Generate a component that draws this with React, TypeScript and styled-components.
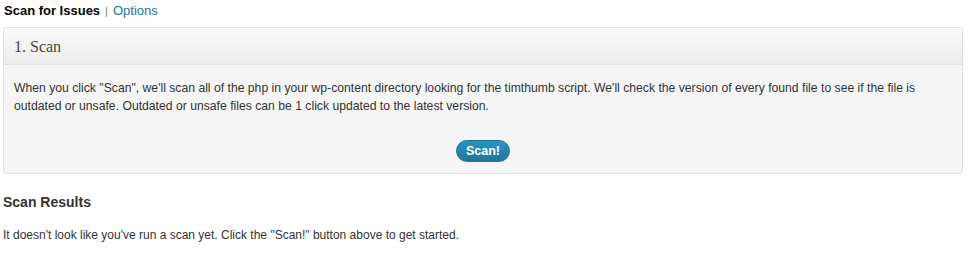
import React from 'react';
import styled, {createGlobalStyle} from "styled-components";

const GlobalStyle = createGlobalStyle`
  html, body {
    margin: 0;
    padding: 0;
    background: #ffffff;
  }
  body {
    font-family: "Liberation Sans", Arial, sans-serif;
    font-size: 13px;
    color: #333333;
  }
`;

function App() {
  return (
    <>
      <GlobalStyle />
      <Page>
        <SubNav>
          <li className="current">Scan for Issues</li>
          <li className="sep">|</li>
          <li><a href="#">Options</a></li>
        </SubNav>

        <Postbox>
          <PostboxTitle>1. Scan</PostboxTitle>
          <PostboxInside>
            <p>
              When you click "Scan", we'll scan all of the php in your wp-content directory looking for the timthumb script. We'll check the version of every found file to see if the file is outdated or unsafe. Outdated or unsafe files can be 1 click updated to the latest version.
            </p>
            <ButtonRow>
              <ScanButton>Scan!</ScanButton>
            </ButtonRow>
          </PostboxInside>
        </Postbox>

        <SectionTitle>Scan Results</SectionTitle>
        <Note>It doesn't look like you've run a scan yet. Click the "Scan!" button above to get started.</Note>
      </Page>
    </>
  );
}

export default App;

const Page = styled.div`
  padding: 0 6px 0 3px;
`;

const SubNav = styled.ul`
  list-style: none;
  margin: 0;
  padding: 3px 0 0 1px;
  height: 24px;
  display: flex;
  align-items: flex-start;
  gap: 5px;
  font-size: 13px;
  line-height: 16px;
  li.current {
    font-weight: bold;
    color: #000;
  }
  li.sep {
    color: #777;
    font-size: 11px;
  }
  a {
    color: #21759b;
    text-decoration: none;
  }
`;

const Postbox = styled.div`
  border: 1px solid #dfdfdf;
  border-radius: 3px;
  background: #f5f5f5;
  box-shadow: 0 1px 0 #fff inset;
`;

const PostboxTitle = styled.h3`
  margin: 0;
  height: 37px;
  padding: 1px 0 0 10px;
  box-sizing: border-box;
  display: flex;
  align-items: center;
  font-family: Georgia, "Liberation Serif", serif;
  font-weight: normal;
  font-size: 16px;
  color: #464646;
  background: linear-gradient(to bottom, #f9f9f9, #ececec);
  border-bottom: 1px solid #dfdfdf;
  border-radius: 3px 3px 0 0;
`;

const PostboxInside = styled.div`
  padding: 14px 10px 11px 10px;
  p {
    margin: 0;
    padding-right: 12px;
    font-size: 12.2px;
    line-height: 18px;
    color: #333;
  }
`;

const ButtonRow = styled.div`
  display: flex;
  justify-content: center;
  margin-top: 25px;
`;

const ScanButton = styled.button`
  height: 22px;
  padding: 0 9px;
  border: 1px solid #21759b;
  border-radius: 11px;
  background: linear-gradient(to bottom, #2a95c5, #21759b);
  color: #fff;
  font-family: "Liberation Sans", Arial, sans-serif;
  font-weight: bold;
  font-size: 12.5px;
  cursor: pointer;
`;

const SectionTitle = styled.h3`
  margin: 19px 0 0 0;
  font-size: 14px;
  line-height: 18px;
  color: #333;
`;

const Note = styled.p`
  margin: 15px 0 0 0;
  font-size: 12px;
  line-height: 18px;
`;
